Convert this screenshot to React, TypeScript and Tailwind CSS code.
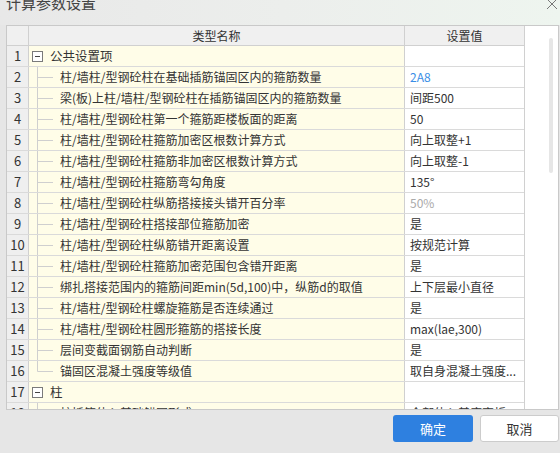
import React from 'react';

type Row = {
  no: number;
  name: string;
  value?: string;
  kind: 'group' | 'child' | 'last';
  tone?: 'link' | 'muted';
};

const rows: Row[] = [
  { no: 1, name: '公共设置项', kind: 'group' },
  { no: 2, name: '柱/墙柱/型钢砼柱在基础插筋锚固区内的箍筋数量', value: '2A8', kind: 'child', tone: 'link' },
  { no: 3, name: '梁(板)上柱/墙柱/型钢砼柱在插筋锚固区内的箍筋数量', value: '间距500', kind: 'child' },
  { no: 4, name: '柱/墙柱/型钢砼柱第一个箍筋距楼板面的距离', value: '50', kind: 'child' },
  { no: 5, name: '柱/墙柱/型钢砼柱箍筋加密区根数计算方式', value: '向上取整+1', kind: 'child' },
  { no: 6, name: '柱/墙柱/型钢砼柱箍筋非加密区根数计算方式', value: '向上取整-1', kind: 'child' },
  { no: 7, name: '柱/墙柱/型钢砼柱箍筋弯勾角度', value: '135°', kind: 'child' },
  { no: 8, name: '柱/墙柱/型钢砼柱纵筋搭接接头错开百分率', value: '50%', kind: 'child', tone: 'muted' },
  { no: 9, name: '柱/墙柱/型钢砼柱搭接部位箍筋加密', value: '是', kind: 'child' },
  { no: 10, name: '柱/墙柱/型钢砼柱纵筋错开距离设置', value: '按规范计算', kind: 'child' },
  { no: 11, name: '柱/墙柱/型钢砼柱箍筋加密范围包含错开距离', value: '是', kind: 'child' },
  { no: 12, name: '绑扎搭接范围内的箍筋间距min(5d,100)中，纵筋d的取值', value: '上下层最小直径', kind: 'child' },
  { no: 13, name: '柱/墙柱/型钢砼柱螺旋箍筋是否连续通过', value: '是', kind: 'child' },
  { no: 14, name: '柱/墙柱/型钢砼柱圆形箍筋的搭接长度', value: 'max(lae,300)', kind: 'child' },
  { no: 15, name: '层间变截面钢筋自动判断', value: '是', kind: 'child' },
  { no: 16, name: '锚固区混凝土强度等级值', value: '取自身混凝土强度...', kind: 'last' },
  { no: 17, name: '柱', kind: 'group' },
  { no: 18, name: '柱插筋伸入基础锚固形式', value: '全部伸入基底弯折', kind: 'child' },
];

function TreeLine({ last }: { last: boolean }) {
  return (
    <svg width="31" height="20" className="shrink-0">
      <line x1="8.5" y1="0" x2="8.5" y2={last ? 10.5 : 20} stroke="#cfcfcf" strokeWidth="1" />
      <line x1="8.5" y1="10.5" x2="24" y2="10.5" stroke="#cfcfcf" strokeWidth="1" />
    </svg>
  );
}

function CollapseBox() {
  return (
    <span className="ml-[3px] flex h-[11px] w-[11px] shrink-0 items-center justify-center border border-[#7a7a7a] bg-white">
      <span className="h-px w-[5px] bg-[#444]" />
    </span>
  );
}

export default function App() {
  return (
    <div
      className="h-[453px] w-[560px] overflow-hidden bg-[#e6e6e6] text-[#333]"
      style={{ fontFamily: '"Noto Sans CJK SC", "Noto Sans", sans-serif' }}
    >
      {/* title bar */}
      <div className="flex h-[25px] items-start justify-between bg-gradient-to-r from-[#e8e8e8] via-[#eceeec] to-[#eef5ef]">
        <span className="ml-[6px] mt-[-5px] text-[15px] leading-[15px] text-[#444]">计算参数设置</span>
        <svg width="12" height="12" className="mr-[2px] mt-[-2px]">
          <line x1="1" y1="1" x2="11" y2="11" stroke="#777" strokeWidth="1" />
          <line x1="11" y1="1" x2="1" y2="11" stroke="#777" strokeWidth="1" />
        </svg>
      </div>

      {/* grid */}
      <div className="ml-[6px] flex h-[385px] w-[553px] border border-[#c9c9c9] bg-white">
        <div className="w-[518px] shrink-0 overflow-hidden border-r border-[#d0d0d0] text-[12px]">
          <div className="flex h-[20px] border-b border-[#d0d0d0] bg-[#f0f0f0]">
            <div className="w-[22px] shrink-0 border-r border-[#d0d0d0]" />
            <div className="flex w-[376px] shrink-0 items-center justify-center border-r border-[#d0d0d0]">类型名称</div>
            <div className="flex flex-1 items-center justify-center">设置值</div>
          </div>
          {rows.map((r) => (
            <div key={r.no} className="flex h-[21px] border-b border-[#dadada]">
              <div className="flex w-[22px] shrink-0 items-center justify-center border-r border-[#d0d0d0] bg-[#efefef] text-[13px]">
                {r.no}
              </div>
              <div className="flex w-[376px] shrink-0 items-center overflow-hidden whitespace-nowrap border-r border-[#d0d0d0] bg-[#fffde8]">
                {r.kind === 'group' ? (
                  <>
                    <CollapseBox />
                    <span className="ml-[7px] text-[12.5px]">{r.name}</span>
                  </>
                ) : (
                  <>
                    <TreeLine last={r.kind === 'last'} />
                    <span>{r.name}</span>
                  </>
                )}
              </div>
              <div
                className={`flex min-w-0 flex-1 items-center overflow-hidden whitespace-nowrap px-[5px] ${
                  r.tone === 'link' ? 'text-[#3a8ee6]' : r.tone === 'muted' ? 'text-[#aaaaaa]' : ''
                }`}
              >
                {r.value}
              </div>
            </div>
          ))}
        </div>
        <div className="flex flex-1 justify-end pr-[5px] pt-[12px]">
          <div className="h-[135px] w-[4px] rounded-full bg-[#e6e6e6]" />
        </div>
      </div>

      {/* buttons */}
      <div className="mt-[5px] flex justify-end gap-[7px] pr-[1px]">
        <button className="flex h-[27px] w-[80px] items-center justify-center rounded-[3px] bg-[#2e80e0] text-[13px] text-white">
          确定
        </button>
        <button className="flex h-[27px] w-[79px] items-center justify-center rounded-[3px] border border-[#cccccc] bg-white text-[13px] text-[#333]">
          取消
        </button>
      </div>
    </div>
  );
}
